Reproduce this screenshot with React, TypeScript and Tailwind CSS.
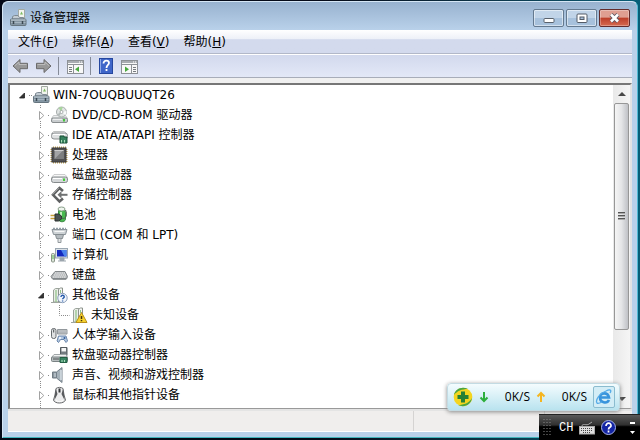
import { useState } from "react";
import type { ReactNode } from "react";

type IconName =
  | "computerRoot"
  | "dvd"
  | "ide"
  | "cpu"
  | "disk"
  | "storage"
  | "battery"
  | "port"
  | "monitor"
  | "keyboard"
  | "other"
  | "unknown"
  | "hid"
  | "floppy"
  | "sound"
  | "mouse"
  | "network";

type Device = { name: string; icon: IconName; children?: Device[] };

const devices: Device[] = [
  { name: "DVD/CD-ROM 驱动器", icon: "dvd" },
  { name: "IDE ATA/ATAPI 控制器", icon: "ide" },
  { name: "处理器", icon: "cpu" },
  { name: "磁盘驱动器", icon: "disk" },
  { name: "存储控制器", icon: "storage" },
  { name: "电池", icon: "battery" },
  { name: "端口 (COM 和 LPT)", icon: "port" },
  { name: "计算机", icon: "monitor" },
  { name: "键盘", icon: "keyboard" },
  {
    name: "其他设备",
    icon: "other",
    children: [{ name: "未知设备", icon: "unknown" }],
  },
  { name: "人体学输入设备", icon: "hid" },
  { name: "软盘驱动器控制器", icon: "floppy" },
  { name: "声音、视频和游戏控制器", icon: "sound" },
  { name: "鼠标和其他指针设备", icon: "mouse" },
];

const menus = [
  { label: "文件", hotkey: "F" },
  { label: "操作", hotkey: "A" },
  { label: "查看", hotkey: "V" },
  { label: "帮助", hotkey: "H" },
];

const drive = (
  <>
    <path d="M3.5 9.5h12l2 3h-16z" fill="#eceeee" stroke="#b4b8ba" strokeWidth=".7" />
    <rect x="1.500" y="12" width="16" height="4.500" rx="1.500" fill="#c9cdcf" stroke="#7d8285" strokeWidth=".9" />
    <path d="M3 13.300h9" stroke="#f7f7f7" />
    <rect x="13" y="13" width="2" height="2.500" fill="#45c63c" />
  </>
);

const tower = (
  <>
    <path d="M3.500 16V4l2-1.500H9V16z" fill="#e9ece7" stroke="#9ba39a" />
    <path d="M6 4v12" stroke="#8fc487" strokeWidth="1.200" />
    <path d="M8.500 3.500l2-1.500h2v14h-4z" fill="#f6f7f5" stroke="#8b928a" />
    <path d="M10.500 4v3" stroke="#8fc487" />
    <path d="M1 16.500h10" stroke="#9fa69f" />
  </>
);

const icons: Record<IconName, ReactNode> = {
  computerRoot: (
    <>
      <path d="M9.500.500h6v10h-6z" fill="#f3f5ef" stroke="#a3aaa2" />
      <path d="M11 5.500l1.500-3L14 5.500z" fill="#7dbb63" />
      <path d="M3.500 10V7.500l2-1H9l1.500 2h4V10z" fill="#c3ccd3" stroke="#7f8b94" />
      <rect x="1.500" y="10" width="15.500" height="6.500" rx="1" fill="#8496a3" stroke="#66757f" />
      <path d="M2 11h14.500" stroke="#c7d2da" />
      <path d="M2 13.500h14.500" stroke="#a7b6c1" />
      <path d="M4.500 12v3M13.500 12v3" stroke="#3b4851" strokeWidth="1.500" />
    </>
  ),
  dvd: (
    <>
      {drive}
      <circle cx="11.500" cy="6" r="5" fill="#e0e4e3" stroke="#a6acab" />
      <path d="M11.500 6l-3-4a5 5 0 0 1 4-1z" fill="#a8d69c" />
      <path d="M11.500 6l4 3a5 5 0 0 0 1-4z" fill="#f9fafa" />
      <path d="M11.500 6l-4 2a5 5 0 0 0 2 2z" fill="#b3bab9" />
      <circle cx="11.500" cy="6" r="1.500" fill="#fff" stroke="#8e9493" strokeWidth=".7" />
    </>
  ),
  ide: (
    <>
      <path d="M3.500 5.500h11l2 2H1.500z" fill="#f4f4f4" stroke="#c0c2c2" />
      <rect x="1.500" y="7" width="16" height="6" rx="2.500" fill="#dfe1e2" stroke="#8b8f91" />
      <path d="M3 8.500h12" stroke="#fff" />
      <path d="M10 10h4v1h3v6h-7z" fill="#37825e" stroke="#1d5239" />
      <path d="M11.500 14v2.500M14.500 14v2.500" stroke="#a8ddb9" />
    </>
  ),
  cpu: (
    <>
      <path d="M3 1.500h13M3 16.500h13M1.500 3v13M16.500 3v13" stroke="#bfa04f" strokeWidth="2" strokeDasharray="1 1" />
      <rect x="2" y="2" width="14" height="14" fill="#515152" stroke="#3b3b3c" />
      <path d="M4.500 4h9v9h-9z" fill="#a3a4a5" />
      <path d="M4.500 13l9-9v9z" fill="#7d7e7f" />
      <path d="M4.500 4.500h9" stroke="#cfcfcf" />
    </>
  ),
  disk: (
    <>
      <path d="M4 8.500h11l2.500 3h-16z" fill="#f7f7f7" stroke="#c0c2c3" strokeWidth=".8" />
      <rect x="1.500" y="11" width="16" height="5.500" rx="2" fill="#d3d6d8" stroke="#858a8c" />
      <path d="M3 12.500h9" stroke="#fff" />
      <rect x="13" y="12.500" width="2" height="2.500" fill="#42cf36" />
    </>
  ),
  storage: (
    <>
      <path d="M13 5L9.500 2 3 8.800l6.500 6.700 3.500-3" fill="none" stroke="#5f6162" strokeWidth="2.600" />
      <path d="M17.500 8.800H10" stroke="#707273" strokeWidth="2" />
      <path d="M11.500 5v7.500L7.500 8.800z" fill="#707273" />
      <path d="M9 2L2.500 8.500" stroke="#a8aaab" strokeWidth=".8" />
    </>
  ),
  battery: (
    <>
      <path d="M8.500 3.500h6l1 3v7c-1 3-6 3-7 0z" fill="#49b950" stroke="#3c8a43" />
      <ellipse cx="11.500" cy="3" rx="3.500" ry="2" fill="#eff5ee" stroke="#8aa08b" />
      <path d="M11 6v5" stroke="#c5f0c0" strokeWidth="2" />
      <path d="M.500 9.500h5M.500 12.500h5" stroke="#c7a03a" strokeWidth="1.300" />
      <path d="M5 8h3.500l3 2v3l-3 2H5z" fill="#4b5351" stroke="#2c3331" />
      <path d="M11.500 12c5 2 6-4 4-8" fill="none" stroke="#4c5f4f" />
    </>
  ),
  port: (
    <>
      <path d="M2 3.500h15l-1.500 5h-12z" fill="#cdd2d5" stroke="#8a9298" />
      <path d="M3 2.500h13" stroke="#94a0a8" strokeWidth="1.500" strokeDasharray="2 1" />
      <path d="M5.500 8.500h8l-1 4h-6z" fill="#b5bbbf" stroke="#858c90" />
      <path d="M8 12.500h3v4H8z" fill="#e3e5e6" stroke="#92999d" />
      <path d="M4.500 5.500h10" stroke="#f7f8f8" />
    </>
  ),
  monitor: (
    <>
      <rect x="5.500" y="2.500" width="12" height="9.500" fill="#dbe1e6" stroke="#9aa7b2" />
      <rect x="7" y="4" width="9.500" height="6.500" fill="#1429bd" />
      <path d="M11 4h5.500v6.500h-2z" fill="#4a83ed" />
      <path d="M10 12h4v2.500h-4zM8 15h8" fill="#9aa6af" stroke="#9ba5ad" />
      <rect x="1.500" y="7.500" width="3" height="8.500" rx="1" fill="#dae4d7" stroke="#899487" />
      <path d="M3 9v4" stroke="#5eba54" />
    </>
  ),
  keyboard: (
    <>
      <path d="M5 5.500h10l2.500 5-1 2.500H2.500L1 10.500z" fill="#b2b5b7" stroke="#83878a" strokeLinejoin="round" />
      <path d="M5 7h10M4 9h12M3 11h13" stroke="#f0f1f2" strokeWidth="1.200" strokeDasharray="1.500 .7" />
      <path d="M3 13h13" stroke="#6b7073" />
    </>
  ),
  other: (
    <>
      {tower}
      <circle cx="12.500" cy="12" r="4.700" fill="#f0f5fb" stroke="#8ca0bc" />
      <path d="M11 11c0-2.500 3.500-2 3.200 0-.2 1-1.600 1-1.600 2.300M12.600 14.500v1" fill="none" stroke="#2459aa" strokeWidth="1.400" />
    </>
  ),
  unknown: (
    <>
      {tower}
      <path d="M11.500 6.500L17 16.500H6z" fill="#f7d22c" stroke="#b78f1b" strokeLinejoin="round" />
      <path d="M11.500 10v3M11.500 14v1.300" stroke="#44340b" strokeWidth="1.500" />
    </>
  ),
  hid: (
    <>
      <rect x="1.500" y="2.500" width="4.500" height="10" rx="2" fill="#e0e2e3" stroke="#666b6e" />
      <path d="M3.700 3.500v3" stroke="#454a4e" />
      <path d="M7.500 3.500h9.500v4.500H7.500z" fill="#cfd2d4" stroke="#92989c" />
      <path d="M8.500 5h8M8.500 6.800h8" stroke="#7a8186" strokeDasharray="1 1" />
      <path d="M8.500 10h7.500l1.500 5-1.500 1.500-2-3h-3.500l-2 3L7 15z" fill="#b5c9e2" stroke="#6a86ab" />
      <circle cx="10" cy="12" r="1" fill="#fff" />
      <circle cx="14.500" cy="12" r="1" fill="#315f9c" />
    </>
  ),
  floppy: (
    <>
      <path d="M10.500 1.500H17v8h-6.500z" fill="#737b80" stroke="#555c60" />
      <path d="M11.500 2H16v3.500h-4.500z" fill="#f5f5f5" />
      <path d="M4 8.500h12l1.500 3h-16z" fill="#eff1f1" stroke="#a1a6a8" />
      <rect x="1.500" y="11" width="16" height="4.500" rx="1" fill="#b9bfc0" stroke="#7a8284" />
      <path d="M3 13h6" stroke="#4a5052" />
      <path d="M10 11.500h7v5h-7z" fill="#398462" stroke="#235f43" />
      <path d="M12 14v2M14.500 14v2" stroke="#a9dfbc" />
    </>
  ),
  sound: (
    <>
      <path d="M2.500 6h4v6h-4z" fill="#8a969f" stroke="#6f7a82" />
      <path d="M6.500 6L12 1.500v15L6.500 12z" fill="#a5b1b9" stroke="#74808a" />
      <path d="M11 4v10" stroke="#d7dfe4" strokeWidth="1.500" />
      <path d="M5 7v4" stroke="#d7dfe4" />
    </>
  ),
  mouse: (
    <>
      <path d="M6 2.500c2-1.500 5-1.500 7 0l1 6.500 1.500 5c-1.500 4-11 4-12 0L5 9z" fill="#ececed" stroke="#66686a" />
      <path d="M6 3l1.500 5-3 6L5 8zM13 3l-1.500 5 3 6L14 8z" fill="#595b5e" />
      <path d="M9.500 2.500v4" stroke="#343638" strokeWidth="2" />
      <path d="M6 14c1 2 6 2 7 0" fill="none" stroke="#fff" />
    </>
  ),
  network: (
    <>
      <rect x="5.500" y="2.500" width="8" height="7" fill="#2f56b5" stroke="#747b80" />
      <path d="M5 12h9" stroke="#747b80" />
    </>
  ),
};

function DeviceIcon({ name }: { name: IconName }) {
  return (
    <svg width="18" height="18" viewBox="0 0 18 18" className="shrink-0" aria-hidden="true">
      {icons[name]}
    </svg>
  );
}

function Expander({ open }: { open?: boolean }) {
  return (
    <svg width="16" height="20" viewBox="0 0 16 20" className="shrink-0" aria-hidden="true">
      <path d="M6.500 0v20M14 10.500h2" stroke="#8b8b8b" strokeDasharray="1 1" />
      <path d="M4 4h8v12H4z" fill="#fff" />
      {open ? (
        <path d="M9.500 8v5H4.500z" fill="#333" stroke="#222" strokeWidth=".8" />
      ) : (
        <path d="M5.500 6.500v8l4.300-4z" fill="#fff" stroke="#a2a2a2" />
      )}
    </svg>
  );
}

function DeviceRow({ device }: { device: Device }) {
  const [open, setOpen] = useState(true);
  return (
    <li>
      <button type="button" onClick={() => setOpen(!open)} className="flex h-5 items-center pl-6 whitespace-nowrap">
        <Expander open={open && !!device.children} />
        <DeviceIcon name={device.icon} />
        <span className="pl-1">{device.name}</span>
      </button>
      {open && device.children && (
        <ul>
          {device.children.map((child) => (
            <li key={child.name} className="flex h-5 items-center pl-6 whitespace-nowrap">
              <svg width="36" height="20" viewBox="0 0 36 20" className="shrink-0" aria-hidden="true">
                <path d="M6.500 0v20M25.500 0v10.500h10" fill="none" stroke="#8b8b8b" strokeDasharray="1 1" />
              </svg>
              <DeviceIcon name={child.icon} />
              <span className="pl-[3px]">{child.name}</span>
            </li>
          ))}
        </ul>
      )}
    </li>
  );
}

function ArrowIcon({ flip }: { flip?: boolean }) {
  return (
    <svg width="17" height="16" viewBox="0 0 17 16" className={flip ? "-scale-x-100" : ""} aria-hidden="true">
      <path d="M1 8l7-6.500v3.800h7.500v5.400H8v3.800z" fill="#989898" stroke="#6b6b6b" strokeLinejoin="round" />
      <path d="M3 7.700l4-3.700v2.500h7.500" fill="none" stroke="#bcbcbc" />
    </svg>
  );
}

function PaneIcon({ flip }: { flip?: boolean }) {
  return (
    <svg width="17" height="16" viewBox="0 0 17 16" aria-hidden="true">
      <rect x=".5" y="2.500" width="16" height="13" fill="#f8f8f8" stroke="#8d9196" />
      <path d="M1 4h15" stroke="#a8acb1" strokeWidth="2" />
      <path d="M12 4h1M14 4h1" stroke="#fff" />
      <path d="M1 6.500h15" stroke="#8d9196" />
      {flip ? (
        <>
          <path d="M10.500 7v8" stroke="#8d9196" />
          <path d="M12 9.500h3M12 11.500h3M12 13.500h3" stroke="#777b80" />
          <path d="M4 8.500V14l4-2.700z" fill="#47a83c" />
        </>
      ) : (
        <>
          <path d="M6.500 7v8" stroke="#8d9196" />
          <path d="M2 9.500h3M2 11.500h3M2 13.500h3" stroke="#777b80" />
          <path d="M12 8.500V14l-4-2.700z" fill="#47a83c" />
        </>
      )}
    </svg>
  );
}

function WindowButtons() {
  const base =
    "flex h-[18px] w-[31px] items-center justify-center rounded-xs border border-[#64798f] bg-linear-to-b from-[#c1d4e8] from-50% to-[#a7c1dc] to-50% inset-ring inset-ring-white/50";
  return (
    <div className="flex gap-0.5">
      <button type="button" aria-label="最小化" className={base}>
        <svg width="12" height="12" viewBox="0 0 12 12">
          <rect x="1" y="6.500" width="10" height="4" rx="1" fill="#fff" stroke="#59616c" />
        </svg>
      </button>
      <button type="button" aria-label="最大化" className={base}>
        <svg width="12" height="12" viewBox="0 0 12 12">
          <rect x="1" y="2" width="10" height="8.500" rx="1" fill="#fff" stroke="#535b67" />
          <rect x="4" y="5" width="4" height="2.500" fill="#a8c0da" stroke="#535b67" />
        </svg>
      </button>
      <button
        type="button"
        aria-label="关闭"
        className="flex h-[18px] w-[31px] items-center justify-center rounded-xs border border-[#632c2c] bg-linear-to-b from-[#df9e91] from-45% via-[#bc3d29] via-50% to-[#d56b50] inset-ring inset-ring-white/30"
      >
        <svg width="13" height="12" viewBox="0 0 13 12">
          <path d="M3 2.500l7 7M10 2.500l-7 7" stroke="#5d5662" strokeWidth="4.400" />
          <path d="M3 2.500l7 7M10 2.500l-7 7" stroke="#fff" strokeWidth="2.600" />
        </svg>
      </button>
    </div>
  );
}

function ScrollBar() {
  return (
    <div className="flex w-[17px] shrink-0 flex-col bg-linear-to-r from-[#e9e9e9] to-[#f5f5f5]">
      <button type="button" aria-label="向上滚动" className="flex h-[18px] items-center justify-center">
        <svg width="8" height="4" viewBox="0 0 8 4">
          <path d="M4 0l4 4H0z" fill="#474747" />
        </svg>
      </button>
      <div className="flex-1">
        <div className="mx-px flex h-[79%] flex-col items-center justify-center gap-px rounded-xs border border-[#979797] bg-linear-to-r from-[#f5f5f5] via-[#e4e5e7] to-[#bfc1c6]">
          <div className="h-0.5 w-[7px] border-t border-[#555] bg-[#aaa]" />
          <div className="h-0.5 w-[7px] border-t border-[#555] bg-[#aaa]" />
          <div className="h-0.5 w-[7px] border-t border-[#555] bg-[#aaa]" />
        </div>
      </div>
      <button type="button" aria-label="向下滚动" className="flex h-[18px] items-center justify-center">
        <svg width="8" height="4" viewBox="0 0 8 4">
          <path d="M0 0h8L4 4z" fill="#474747" />
        </svg>
      </button>
    </div>
  );
}

function SpeedWidget() {
  return (
    <div className="absolute right-5 bottom-[29px] flex h-7 w-[173px] items-center rounded-sm border border-[#c3dbe3] bg-linear-to-b from-[#f4fcfe] to-[#b9e3ef] pr-1 pl-[5px] font-['Open_Sans','Noto_Sans_CJK_SC',sans-serif] shadow-[0_1px_4px_#888]">
      <svg width="20" height="20" viewBox="0 0 20 20" aria-hidden="true">
        <circle cx="10" cy="10" r="9.300" fill="#f4d51f" />
        <path d="M1 8C2 2 9-1 15 2 9 2 4 4 1 8zM19 11c-1 7-8 10-14 7 6 0 11-2 14-7z" fill="#4aa443" />
        <path d="M8 4.500h4V8h3.500v4H12v3.500H8V12H4.500V8H8z" fill="#278034" />
      </svg>
      <svg width="10" height="12" viewBox="0 0 10 12" className="ml-1.5" aria-hidden="true">
        <path d="M5 1v9M1.500 6.500L5 10l3.500-3.500" fill="none" stroke="#2cae3c" strokeWidth="2" />
      </svg>
      <span className="flex-1 text-right">0K/S</span>
      <svg width="10" height="12" viewBox="0 0 10 12" className="ml-1.5" aria-hidden="true">
        <path d="M5 11V2M1.500 5.500L5 2l3.500 3.500" fill="none" stroke="#f5b51f" strokeWidth="2" />
      </svg>
      <span className="flex-1 text-right">0K/S</span>
      <button
        type="button"
        aria-label="浏览器"
        className="ml-1.5 flex size-[22px] items-center justify-center rounded-xs border border-[#8bbccf] bg-[#d3edf6]"
      >
        <svg width="18" height="18" viewBox="0 0 18 18">
          <path d="M14 12c-2 4-9 3-9-2.500S13 4 14 9.500H6" fill="none" stroke="#3994dc" strokeWidth="2.600" />
          <path d="M15 5c2-3 0-4-4-2C5 5 0 12 2 15c1 1 3 0 5-1" fill="none" stroke="#55abe8" strokeWidth="1.300" />
        </svg>
      </button>
    </div>
  );
}

function LanguageBar() {
  return (
    <div className="absolute right-0 bottom-0 flex h-[26px] w-[101px] items-center border-t border-[#222] bg-linear-to-b from-[#5a5a5a] via-[#303030] via-40% to-black to-50% pr-1 pl-1 text-white">
      <svg width="8" height="18" viewBox="0 0 8 18" aria-hidden="true">
        <path d="M1 0v18M4 0v18M7 0v18" stroke="#8a8a8a" strokeWidth="1" strokeDasharray="1 2" />
      </svg>
      <button type="button" className="ml-2 font-['Liberation_Mono','Noto_Sans_CJK_SC',monospace] text-xs">
        CH
      </button>
      <svg width="16" height="14" viewBox="0 0 16 14" className="ml-1.5" aria-hidden="true">
        <path d="M3 5c0-3 5 0 7-2l3-2" fill="none" stroke="#aaa" />
        <rect x=".5" y="5.500" width="15" height="7.500" fill="#ddd" stroke="#aaa" />
        <path d="M2 7.500h12M2 9.500h12M4 11.500h8" stroke="#444" strokeDasharray="1 1" />
      </svg>
      <button
        type="button"
        aria-label="帮助"
        className="ml-1.5 flex size-[15px] items-center justify-center rounded-full border border-[#a8b4e8] bg-[#1425a5]"
      >
        <svg width="9" height="11" viewBox="0 0 9 11">
          <path d="M2 4c0-4 5.500-3.500 5 0C6.500 5.500 4.500 5.300 4.500 7.500M4.500 8.500v2" fill="none" stroke="#fff" strokeWidth="1.700" />
        </svg>
      </button>
      <svg width="7" height="16" viewBox="0 0 7 16" className="ml-auto" aria-hidden="true">
        <path d="M1 3h5" stroke="#fff" strokeWidth="2" />
        <path d="M1 11h5l-2.500 3z" fill="#fff" />
      </svg>
    </div>
  );
}

export default function DeviceManager() {
  return (
    <div className="relative flex h-screen flex-col overflow-hidden bg-linear-to-r from-[#050a18] from-50% to-[#075f78] pt-px pr-0.5 pb-0.5 pl-0.5 font-['DejaVu_Sans','Noto_Sans_CJK_SC',sans-serif] text-xs text-black">
      <main className="flex min-h-0 flex-1 flex-col rounded-t-md border border-[#d5e6f5] border-r-[#53b9d3] border-b-[#42b5bd] bg-[#b9d1ea] px-[5px] pb-[5px]">
        {/* === Title Bar === */}
        <header className="-mx-[5px] flex h-7 shrink-0 items-center justify-between rounded-t-md bg-linear-to-b from-[#98b2cf] to-[#b9d1ea] pt-1 pr-[7px] pl-1.5">
          <div className="flex items-center gap-[3px]">
            <DeviceIcon name="computerRoot" />
            <h1>设备管理器</h1>
          </div>
          <WindowButtons />
        </header>

        {/* === Menu Bar === */}
        <nav className="flex h-6 shrink-0 items-center gap-3.5 border-b border-[#b2b8c8] bg-linear-to-b from-white via-[#eef1f8] via-38% to-[#d3daed] to-42% pl-2.5">
          {menus.map((menu) => (
            <button key={menu.hotkey} type="button">
              {menu.label}(<span className="underline">{menu.hotkey}</span>)
            </button>
          ))}
        </nav>

        {/* === Toolbar === */}
        <div className="flex h-6 shrink-0 items-center border-t border-b border-t-white border-b-[#a8adb9] bg-linear-to-b from-[#d2d9ed] to-[#e3e8f7] pl-1">
          <button type="button" aria-label="后退">
            <ArrowIcon />
          </button>
          <button type="button" aria-label="前进" className="ml-1.5">
            <ArrowIcon flip />
          </button>
          <span className="ml-1.5 h-[18px] w-px bg-[#858b98]" />
          <button type="button" aria-label="显示控制台树" className="ml-2">
            <PaneIcon />
          </button>
          <span className="ml-1.5 h-[18px] w-px bg-[#858b98]" />
          <button type="button" aria-label="帮助" className="ml-2">
            <svg width="14" height="16" viewBox="0 0 14 16">
              <rect x=".5" y=".5" width="13" height="15" fill="#3f66c9" stroke="#25479f" />
              <path d="M1.500 1v14" stroke="#8fa9e8" />
              <path d="M4.500 5.500C4.500 1.500 10 2 10 5c0 2-2.500 2-2.500 5M7.500 11v2" fill="none" stroke="#fff" strokeWidth="1.800" />
            </svg>
          </button>
          <button type="button" aria-label="显示操作窗格" className="ml-2">
            <PaneIcon flip />
          </button>
        </div>

        {/* === Device Tree === */}
        <section className="flex min-h-0 flex-1 flex-col bg-[#f0f0f0] pt-[5px]">
          <div className="flex min-h-0 flex-1 border-t-2 border-r-2 border-b border-l-2 border-t-[#777] border-r-[#e3e3e3] border-b-[#999] border-l-[#777] bg-white">
            <div className="min-w-0 flex-1 overflow-hidden">
              <div className="flex h-5 items-center pl-2">
                <svg width="14" height="20" viewBox="0 0 14 20" aria-hidden="true">
                  <path d="M6.500 8v5h-5z" fill="#333" stroke="#222" strokeWidth=".8" />
                  <path d="M11 10.500h3" stroke="#8b8b8b" strokeDasharray="1 1" />
                </svg>
                <DeviceIcon name="computerRoot" />
                <span className="pl-[3px]">WIN-7OUQBUUQT26</span>
              </div>
              <ul>
                {devices.map((device) => (
                  <DeviceRow key={device.name} device={device} />
                ))}
                <li className="flex h-5 items-center pl-6">
                  <Expander />
                  <DeviceIcon name="network" />
                </li>
              </ul>
            </div>
            <ScrollBar />
          </div>
        </section>

        {/* === Status Bar === */}
        <footer className="flex h-[23px] shrink-0 border-t-2 border-b border-t-[#e4e4e4] border-b-white bg-[#f0eeed]">
          <div className="w-[65%] border-r border-[#d5d3d2]" />
          <div className="w-[21%] border-r border-[#d5d3d2]" />
        </footer>
      </main>

      <SpeedWidget />
      <LanguageBar />
    </div>
  );
}
